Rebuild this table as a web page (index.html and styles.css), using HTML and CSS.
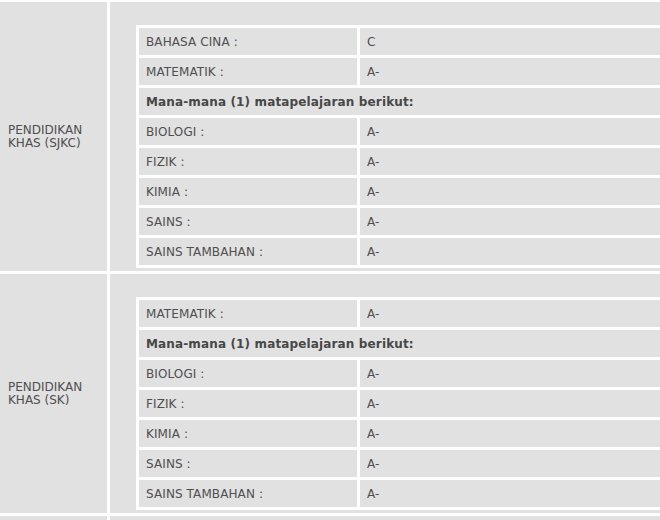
FILE: index.html
```html
<!DOCTYPE html>
<html>
<head>
<meta charset="utf-8">
<link rel="stylesheet" href="styles.css">
</head>
<body>
<table class="outer">
  <colgroup><col class="oc-cat"><col class="oc-req"></colgroup>
  <tr>
    <td class="cat">PENDIDIKAN KHAS (SJKC)</td>
    <td class="req">
      <table class="subj">
        <colgroup><col class="sc-label"><col class="sc-grade"></colgroup>
        <tr><td class="label">BAHASA CINA :</td><td class="grade">C</td></tr>
        <tr><td class="label">MATEMATIK :</td><td class="grade">A-</td></tr>
        <tr><td class="note" colspan="2">Mana-mana (1) matapelajaran berikut:</td></tr>
        <tr><td class="label">BIOLOGI :</td><td class="grade">A-</td></tr>
        <tr><td class="label">FIZIK :</td><td class="grade">A-</td></tr>
        <tr><td class="label">KIMIA :</td><td class="grade">A-</td></tr>
        <tr><td class="label">SAINS :</td><td class="grade">A-</td></tr>
        <tr><td class="label">SAINS TAMBAHAN :</td><td class="grade">A-</td></tr>
      </table>
    </td>
  </tr>
  <tr>
    <td class="cat">PENDIDIKAN KHAS (SK)</td>
    <td class="req">
      <table class="subj">
        <colgroup><col class="sc-label"><col class="sc-grade"></colgroup>
        <tr><td class="label">MATEMATIK :</td><td class="grade">A-</td></tr>
        <tr><td class="note" colspan="2">Mana-mana (1) matapelajaran berikut:</td></tr>
        <tr><td class="label">BIOLOGI :</td><td class="grade">A-</td></tr>
        <tr><td class="label">FIZIK :</td><td class="grade">A-</td></tr>
        <tr><td class="label">KIMIA :</td><td class="grade">A-</td></tr>
        <tr><td class="label">SAINS :</td><td class="grade">A-</td></tr>
        <tr><td class="label">SAINS TAMBAHAN :</td><td class="grade">A-</td></tr>
      </table>
    </td>
  </tr>
  <tr>
    <td class="cat cat-empty"></td>
    <td class="req req-empty"></td>
  </tr>
</table>
</body>
</html>
```

FILE: styles.css
```css
html, body {
  margin: 0;
  padding: 0;
  background: #ffffff;
  overflow: hidden;
}

body {
  font-family: "DejaVu Sans", Verdana, sans-serif;
  font-size: 12px;
  color: #4f4f4f;
}

.outer {
  table-layout: fixed;
  width: 776px;
  border-collapse: separate;
  border-spacing: 3px;
  background: #ffffff;
  margin: -1px 0 0 -3px;
}

.oc-cat { width: 107px; }
.oc-req { width: 660px; }

.cat {
  background: #e1e1e1;
  padding: 0 8px;
  line-height: 13px;
  vertical-align: middle;
}

.req {
  background: #e1e1e1;
  padding: 23px 0 3px 26px;
  vertical-align: top;
}

.cat-empty, .req-empty {
  height: 40px;
}

.subj {
  table-layout: fixed;
  width: 604px;
  border-collapse: separate;
  border-spacing: 3px;
  background: #ffffff;
}

.sc-label { width: 218px; }

.subj td {
  background: #e1e1e1;
  height: 27px;
  padding: 0 7px;
  line-height: 14px;
  vertical-align: middle;
  white-space: nowrap;
}

.label {
  letter-spacing: 0.1px;
}

.note {
  font-weight: bold;
  color: #474747;
  letter-spacing: 0.14px;
}
```
